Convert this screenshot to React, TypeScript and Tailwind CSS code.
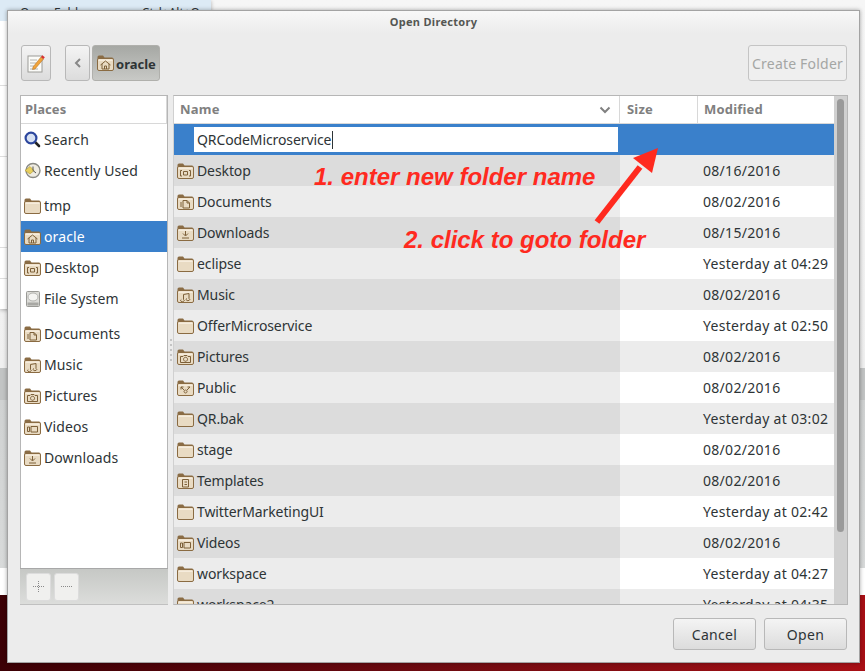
import type { ReactNode } from 'react';

type Emblem =
  | 'none'
  | 'home'
  | 'desktop'
  | 'docs'
  | 'down'
  | 'music'
  | 'pics'
  | 'public'
  | 'templates'
  | 'videos';

const emblems: Record<Emblem, ReactNode> = {
  none: null,
  home: <path d="M3.5 10 8.5 6 13.5 10M5 9V14H12V9M7.5 14V11H9.5V14" />,
  desktop: <path d="M5 7.5H3.5V13H5M12 7.5H13.5V13H12M6.5 8.5H10.5V12H6.5Z" />,
  docs: <path d="M6 14V6.5H10L12.5 9V14ZM10 6.5V9H12.5M4 13V8" />,
  down: <path d="M8.5 6V10.5M6 8.5 8.5 11 11 8.5M5 13H12" />,
  music: <path d="M6.5 12.5V7.5L12 6.5V11.5M4.3 12.5A1.8 1.2 0 1 0 6.5 12.5M9.8 11.5A1.8 1.2 0 1 0 12 11.5" />,
  pics: <path d="M3.5 7.5H6L7 6.5H10L11 7.5H13.5V13.5H3.5ZM8.5 8.3A2 2 0 1 0 8.6 8.3" />,
  public: <path d="M4 7 7 10M4 7H6.5M4 7V9.5M13 7 10 10M13 7H10.5M8.5 10A1.5 1.5 0 1 0 8.6 10" />,
  templates: <path d="M5.5 6.5H11.5V14H5.5ZM7.5 9H10M7.5 11.5H10" />,
  videos: <path d="M3.5 8H5.5V12.5H3.5ZM7 7.5H13.5V13H7Z" />,
};

const Folder = ({ emblem = 'none' }: { emblem?: Emblem }) => (
  <svg width="17" height="16" viewBox="0 0 17 16" className="shrink-0">
    <path d="M0.5 2Q0.5 0.5 2 0.5H6L7.5 2.5H15Q16.5 2.5 16.5 4V6H0.5Z" fill="#8a6c45" />
    <rect x="0.5" y="3.5" width="16" height="12" rx="1.5" fill="#e9dbc3" stroke="#8a6b42" />
    <rect x="1.5" y="4.5" width="14" height="1.5" fill="#f6ecdc" />
    <g fill="none" stroke="#7d6039" strokeWidth="1">
      {emblems[emblem]}
    </g>
  </svg>
);

const SearchIcon = () => (
  <svg width="17" height="17" viewBox="0 0 17 17" className="shrink-0">
    <path d="M10.5 10.5 15 15" stroke="#222" strokeWidth="2.6" strokeLinecap="round" />
    <circle cx="7" cy="7" r="5.4" fill="#d7e1f2" stroke="#2c479e" strokeWidth="2.2" />
  </svg>
);

const ClockIcon = () => (
  <svg width="17" height="17" viewBox="0 0 17 17" className="shrink-0">
    <circle cx="9" cy="8.5" r="7" fill="#efece2" stroke="#8a8a84" strokeWidth="1.4" />
    <path d="M1 8.5 6 4.5 10 8.5 6 12Z" fill="#e8cf5e" stroke="#b09a30" strokeWidth="0.6" />
    <path d="M9 4.5V8.5L12 11" fill="none" stroke="#555" strokeWidth="1" />
  </svg>
);

const DiskIcon = () => (
  <svg width="17" height="16" viewBox="0 0 17 16" className="shrink-0">
    <rect x="2.5" y="0.5" width="13" height="15" rx="1" fill="#dcdcd8" stroke="#9a9a96" />
    <ellipse cx="9" cy="6" rx="5" ry="4" fill="#f4f4f2" stroke="#b4b4b0" />
    <rect x="3.5" y="11.5" width="11" height="3" fill="#a8a8a4" />
  </svg>
);

const NoteIcon = () => (
  <svg width="18" height="20" viewBox="0 0 18 20">
    <rect x="1" y="3" width="14" height="16" fill="#fbfbf8" stroke="#9c9c98" />
    <path d="M3 7H10M3 10H9M3 13H7M3 16H11" stroke="#b4b4b0" strokeWidth="1" />
    <path d="M6 14 14 4 16.5 6 8 16 5.5 16.5Z" fill="#f0a33a" stroke="#a8691e" strokeWidth="0.5" />
    <path d="M14 4 15.3 2.2 17.8 4.2 16.5 6Z" fill="#d93030" />
  </svg>
);

type Place = { label: string; icon: ReactNode; selected?: boolean; gap?: boolean };

const places: Place[] = [
  { label: 'Search', icon: <SearchIcon /> },
  { label: 'Recently Used', icon: <ClockIcon /> },
  { label: 'tmp', icon: <Folder />, gap: true },
  { label: 'oracle', icon: <Folder emblem="home" />, selected: true },
  { label: 'Desktop', icon: <Folder emblem="desktop" /> },
  { label: 'File System', icon: <DiskIcon /> },
  { label: 'Documents', icon: <Folder emblem="docs" />, gap: true },
  { label: 'Music', icon: <Folder emblem="music" /> },
  { label: 'Pictures', icon: <Folder emblem="pics" /> },
  { label: 'Videos', icon: <Folder emblem="videos" /> },
  { label: 'Downloads', icon: <Folder emblem="down" /> },
];

const files: { name: string; emblem?: Emblem; date: string }[] = [
  { name: 'Desktop', emblem: 'desktop', date: '08/16/2016' },
  { name: 'Documents', emblem: 'docs', date: '08/02/2016' },
  { name: 'Downloads', emblem: 'down', date: '08/15/2016' },
  { name: 'eclipse', date: 'Yesterday at 04:29' },
  { name: 'Music', emblem: 'music', date: '08/02/2016' },
  { name: 'OfferMicroservice', date: 'Yesterday at 02:50' },
  { name: 'Pictures', emblem: 'pics', date: '08/02/2016' },
  { name: 'Public', emblem: 'public', date: '08/02/2016' },
  { name: 'QR.bak', date: 'Yesterday at 03:02' },
  { name: 'stage', date: '08/02/2016' },
  { name: 'Templates', emblem: 'templates', date: '08/02/2016' },
  { name: 'TwitterMarketingUI', date: 'Yesterday at 02:42' },
  { name: 'Videos', emblem: 'videos', date: '08/02/2016' },
  { name: 'workspace', date: 'Yesterday at 04:27' },
  { name: 'workspace2', date: 'Yesterday at 04:35' },
];

const App = () => {
  return (
    <div className="relative h-[671px] w-[865px] overflow-hidden bg-[#f4f4f4] font-['Noto_Sans',sans-serif] text-[14px] text-[#2e3436]">
      {/* window behind the dialog */}
      <div className="flex h-full flex-col">
        <div className="h-[368px] shrink-0 bg-gradient-to-b from-[#f6f6f6] to-[#f0f0f0]" />
        <div className="flex h-[200px] shrink-0 flex-col">
          <div className="h-[32px] bg-[#c2c4c4]" />
          <div className="flex-1 bg-gradient-to-b from-[#d0d2d2] to-[#d8dada]" />
        </div>
        <div className="h-[27px] shrink-0 bg-white" />
        <div className="flex-1 bg-gradient-to-r from-[#3c0005] via-[#6e0a10] to-[#a80f15]" />
      </div>

      {/* menu left open behind the dialog */}
      <div className="absolute left-0 top-0 w-[211px] bg-white shadow-[0_1px_4px_rgba(0,0,0,0.3)]">
        <div className="flex h-[21px] items-center justify-between bg-[#dceaf5] pl-[20px] pr-[11px] pt-[5px] text-[12px]">
          <span>Open Folder</span>
          <span>Ctrl+Alt+O</span>
        </div>
        <div className="h-[65px] border-b border-[#dedede]" />
        <div className="h-[71px] border-b border-[#dedede]" />
        <div className="h-[91px] border-b border-[#dedede]" />
        <div className="h-[31px] border-b border-[#dedede]" />
        <div className="h-[30px]" />
      </div>

      {/* dialog */}
      <div className="absolute left-[7px] top-[10px] flex h-[653px] w-[853px] flex-col border border-[#a3a3a3] bg-[#ececec] shadow-[0_0_4px_rgba(0,0,0,0.35)]">
        <div className="flex h-[22px] shrink-0 items-center justify-center bg-gradient-to-b from-[#f8f8f8] to-[#ececec] text-[11px] font-bold tracking-[0.3px] text-[#555753]">
          Open Directory
        </div>

        <div className="mx-[12px] mt-[12px] flex h-[36px] shrink-0 items-stretch">
          <button className="ml-px flex w-[30px] items-center justify-center rounded-[3px] border border-[#b8b8b8] bg-gradient-to-b from-[#f4f4f4] to-[#dcdcdc]">
            <NoteIcon />
          </button>
          <button className="ml-[14px] flex w-[25px] items-center justify-center rounded-[3px] border border-[#b8b8b8] bg-gradient-to-b from-[#f4f4f4] to-[#dcdcdc]">
            <svg width="8" height="10" viewBox="0 0 8 10">
              <path d="M6 1 2 5 6 9" fill="none" stroke="#888" strokeWidth="2" />
            </svg>
          </button>
          <div className="ml-[2px] flex w-[68px] items-center gap-[2px] rounded-[3px] border border-[#b0b0ac] bg-gradient-to-b from-[#a6a8a4] to-[#c8c9c6] pl-[4px] text-[13px] font-bold text-[#2e3436]">
            <Folder emblem="home" />
            <span className="pt-[3px]">oracle</span>
          </div>
          <button className="ml-auto w-[99px] rounded-[3px] border border-[#c4c4c4] bg-[#efefef] tracking-[0.2px] text-[#a4a6a4]">
            Create Folder
          </button>
        </div>

        <div className="ml-[12px] mr-[11px] mt-[14px] flex h-[510px] shrink-0">
          <aside className="flex w-[148px] shrink-0 flex-col">
            <div className="flex min-h-0 flex-1 flex-col border-x border-t border-[#b6b6b6] bg-white tracking-[0.1px]">
              <div className="flex h-[28px] shrink-0 items-center border-b border-r border-[#d8d8d8] pl-[4px] pt-px text-[13px] font-bold text-[#808080]">
                Places
              </div>
              {places.map((p) => (
                <div
                  key={p.label}
                  className={
                    (p.gap ? 'mt-[4px] ' : '') +
                    (p.selected ? 'bg-[#3a80cb] text-white ' : '') +
                    'flex h-[31px] shrink-0 items-center gap-[3px] pl-[3px]'
                  }
                >
                  {p.icon}
                  <span>{p.label}</span>
                </div>
              ))}
            </div>
            <div className="flex h-[37px] shrink-0 items-center gap-[3px] border-b border-t border-b-[#c0c0c0] border-t-[#a8a8a8] bg-gradient-to-b from-[#c6c8c5] to-[#dcdddb] pl-[6px]">
              <button className="flex h-[28px] w-[25px] items-center justify-center rounded-[3px] border border-[#dcdcdc] bg-[#f0f0ee]">
                <svg width="11" height="11" viewBox="0 0 11 11">
                  <path d="M5.5 0V11M0 5.5H11" stroke="#8a8a8a" strokeWidth="1" strokeDasharray="1 1" />
                </svg>
              </button>
              <button className="flex h-[28px] w-[25px] items-center justify-center rounded-[3px] border border-[#dcdcdc] bg-[#f0f0ee]">
                <svg width="11" height="3" viewBox="0 0 11 3">
                  <path d="M0 1.5H11" stroke="#8a8a8a" strokeWidth="1" strokeDasharray="1 1" />
                </svg>
              </button>
            </div>
          </aside>

          <div className="flex w-[5px] shrink-0 flex-col items-center justify-center gap-[3px]">
            {[0, 1, 2, 3, 4].map((d) => (
              <span key={d} className="size-[2px] bg-[#c4c4c4]" />
            ))}
          </div>

          <section className="flex min-w-0 flex-1 border border-[#b6b6b6] border-l-[#d0d0d0] bg-white">
            <div className="flex min-w-0 flex-1 flex-col overflow-hidden">
              <div className="grid h-[28px] shrink-0 grid-cols-[446px_78px_1fr] items-center border-b border-[#d8d8d8] text-[13px] font-bold tracking-[0.2px] text-[#808080]">
                <div className="flex h-full items-center justify-between border-r border-[#d8d8d8] pl-[6px] pr-[8px] pt-px">
                  Name
                  <svg width="12" height="8" viewBox="0 0 12 8">
                    <path d="M1.5 1.5 6 6 10.5 1.5" fill="none" stroke="#808080" strokeWidth="2" />
                  </svg>
                </div>
                <div className="flex h-full items-center border-r border-[#d8d8d8] pl-[7px] pt-px">Size</div>
                <div className="pl-[6px] pt-px">Modified</div>
              </div>

              <div className="flex h-[31px] shrink-0 items-center bg-[#3a80cb] pl-[20px]">
                <div className="flex h-[25px] w-[424px] items-center bg-white pl-[3px] tracking-[-0.1px]">
                  QRCodeMicroservice
                  <span className="ml-px h-[18px] w-px bg-[#2e3436]" />
                </div>
              </div>

              {files.map((f, i) => (
                <div key={f.name} className="grid h-[31px] shrink-0 grid-cols-[446px_78px_1fr] items-center">
                  <div className={(i % 2 === 0 ? 'bg-[#dcdcdc]' : 'bg-[#ececec]') + ' flex h-full items-center gap-[3px] pl-[3px] tracking-[-0.1px]'}>
                    <Folder emblem={f.emblem} />
                    <span>{f.name}</span>
                  </div>
                  <div className={(i % 2 === 0 ? 'bg-[#ececec]' : 'bg-white') + ' h-full'} />
                  <div className={(i % 2 === 0 ? 'bg-[#ececec]' : 'bg-white') + ' flex h-full items-center pl-[5px] tracking-[0.3px]'}>
                    {f.date}
                  </div>
                </div>
              ))}
            </div>
            <div className="w-[13px] shrink-0 bg-[#d0d0d0] pl-[3px] pr-[3px] pt-[3px]">
              <div className="h-[433px] rounded-[4px] bg-[#9a9a9a]" />
            </div>
          </section>
        </div>

        <div className="mx-[12px] mt-[13px] flex h-[32px] shrink-0 justify-end gap-[8px]">
          <button className="w-[83px] rounded-[3px] border border-[#b8b8b8] bg-gradient-to-b from-[#f4f4f4] to-[#dcdcdc] tracking-[0.3px]">Cancel</button>
          <button className="w-[83px] rounded-[3px] border border-[#b8b8b8] bg-gradient-to-b from-[#f4f4f4] to-[#dcdcdc] tracking-[0.3px]">Open</button>
        </div>
      </div>

      {/* red annotations over the dialog */}
      <span className="absolute left-[314px] top-[163px] font-['Liberation_Sans',sans-serif] text-[24px] font-bold italic leading-[28px] text-[#ff2a1f]">
        1. enter new folder name
      </span>
      <span className="absolute left-[404px] top-[226px] font-['Liberation_Sans',sans-serif] text-[24px] font-bold italic leading-[28px] text-[#ff2a1f]">
        2. click to goto folder
      </span>
      <svg className="absolute left-[590px] top-[144px]" width="70" height="82" viewBox="0 0 70 82">
        <path d="M7 78 50 23" stroke="#ff2a1f" strokeWidth="6" />
        <path d="M68 4 62 29 43 14Z" fill="#ff2a1f" />
      </svg>
    </div>
  );
};

export default App;
